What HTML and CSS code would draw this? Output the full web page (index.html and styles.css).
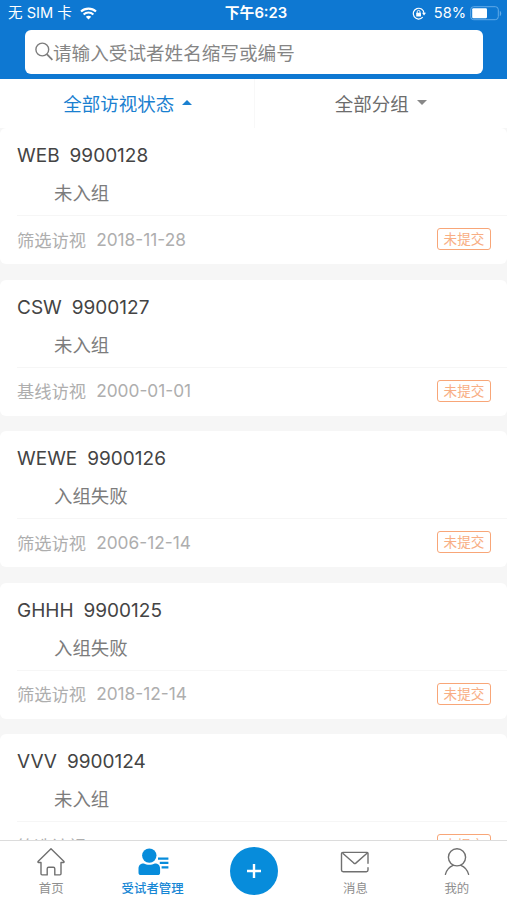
FILE: index.html
```html
<!DOCTYPE html>
<html lang="zh-CN">
<head>
    <meta charset="UTF-8">
    <meta name="viewport" content="width=device-width, initial-scale=1.0">
    <title>受试者管理</title>
    <link rel="stylesheet" href="styles.css">
</head>
<body>
<div class="app">
    <header class="header">
        <div class="status-bar">
            <div class="carrier">
                <span>无 SIM 卡</span>
                <svg class="wifi" viewBox="0 0 17 13" width="17" height="13" fill="none" stroke="#fff" stroke-width="2.1">
                    <path d="M1 4.6C5.2.6 11.8.6 16 4.6"/>
                    <path d="M3.6 7.4c2.8-2.6 7-2.6 9.8 0"/>
                    <path d="M8.5 12.6L5.8 9.8c1.5-1.4 3.9-1.4 5.4 0z" fill="#fff" stroke="none"/>
                </svg>
            </div>
            <div class="time">下午6:23</div>
            <div class="battery-info">
                <svg class="lock" viewBox="0 0 14 13" width="14" height="13" fill="none" stroke="#fff" stroke-width="1.2">
                    <path d="M10.7 10.2A5.4 5.4 0 1 1 12 6.2"/>
                    <path d="M10 5.8h4l-2 2.7z" fill="#fff" stroke="none"/>
                    <rect x="4.2" y="5.8" width="4.8" height="3.6" rx=".5" fill="#fff" stroke="none"/>
                    <path d="M5.2 6V4.8a1.4 1.4 0 0 1 2.8 0V6" stroke-width="1"/>
                </svg>
                <span class="percent">58%</span>
                <svg class="battery" viewBox="0 0 32 15" width="32" height="15">
                    <rect x=".7" y=".7" width="27.6" height="13" rx="3" fill="none" stroke="#62abe8"/>
                    <rect x="2.2" y="2.2" width="14.8" height="10" rx="1.2" fill="#fff"/>
                    <path d="M29.8 5v5c1.9-.6 1.9-4.4 0-5z" fill="#62abe8"/>
                </svg>
            </div>
        </div>
        <div class="search">
            <svg viewBox="0 0 18 19" width="18" height="19" fill="none" stroke="#7d7d7d" stroke-width="1.4">
                <circle cx="7.3" cy="7.5" r="6.4"/>
                <path d="M11.8 12.2l5.6 5.6" stroke-width="1.8"/>
            </svg>
            <span>请输入受试者姓名缩写或编号</span>
        </div>
    </header>

    <div class="filters">
        <div class="filter active">全部访视状态<i class="arrow up"></i></div>
        <div class="filter">全部分组<i class="arrow down"></i></div>
    </div>

    <main class="list">
        <div class="card">
            <div class="name"><span>WEB</span><span>9900128</span></div>
            <div class="group">未入组</div>
            <div class="visit"><span>筛选访视</span><span class="date">2018-11-28</span><span class="tag">未提交</span></div>
        </div>
        <div class="card">
            <div class="name"><span>CSW</span><span>9900127</span></div>
            <div class="group">未入组</div>
            <div class="visit"><span>基线访视</span><span class="date">2000-01-01</span><span class="tag">未提交</span></div>
        </div>
        <div class="card">
            <div class="name"><span>WEWE</span><span>9900126</span></div>
            <div class="group">入组失败</div>
            <div class="visit"><span>筛选访视</span><span class="date">2006-12-14</span><span class="tag">未提交</span></div>
        </div>
        <div class="card">
            <div class="name"><span>GHHH</span><span>9900125</span></div>
            <div class="group">入组失败</div>
            <div class="visit"><span>筛选访视</span><span class="date">2018-12-14</span><span class="tag">未提交</span></div>
        </div>
        <div class="card">
            <div class="name"><span>VVV</span><span>9900124</span></div>
            <div class="group">未入组</div>
            <div class="visit"><span>筛选访视</span><span class="tag">未提交</span></div>
        </div>
    </main>

    <nav class="tabbar">
        <div class="tab">
            <svg viewBox="0 0 30 30" width="30" height="30" fill="none" stroke="#707070" stroke-width="1.4" stroke-linejoin="round">
                <path d="M15 1.8L2 14.6c-.3.5 0 .9.5.9H5v11.3c0 .7.4 1.1 1.1 1.1h5.1v-6.2c0-1 .5-1.5 1.4-1.5h4.8c.9 0 1.4.5 1.4 1.5v6.2h5.1c.7 0 1.1-.4 1.1-1.1V15.5h2.5c.5 0 .8-.4.5-.9z"/>
            </svg>
            <span>首页</span>
        </div>
        <div class="tab active">
            <svg viewBox="0 0 32 30" width="32" height="30" fill="#078cdb">
                <circle cx="12.3" cy="8.6" r="7.2"/>
                <path d="M1.5 25.5v-3.8c0-3.5 2-5.3 5.3-5.3 3.2 1.8 7.8 1.8 11 0 3.3 0 5.3 1.8 5.3 5.3v3.8c0 1.8-.8 2.6-2.6 2.6H4.1c-1.8 0-2.6-.8-2.6-2.6z"/>
                <path d="M21 10.4h10.4v2.3H21zM22.8 14.8h8.6v2.3h-8.6zM24.6 19.2h6.8v2.3h-6.8z"/>
            </svg>
            <span>受试者管理</span>
        </div>
        <div class="tab">
            <div class="add">
                <svg viewBox="0 0 14 14" width="14" height="14" stroke="#fff" stroke-width="2.4">
                    <path d="M7 0v14M0 7h14"/>
                </svg>
            </div>
        </div>
        <div class="tab">
            <svg viewBox="0 0 30 30" width="30" height="30" fill="none" stroke="#707070" stroke-width="1.4" stroke-linecap="round" stroke-linejoin="round">
                <path d="M28 16.3V6.2c0-.5-.3-.8-.8-.8H3c-1 0-1.5.5-1.5 1.5V23c0 1.1.6 1.7 1.7 1.7h23.1c1.1 0 1.7-.6 1.7-1.7v-2.3"/>
                <path d="M3 6.5l10.8 9.6c.6.5 1.4.5 2 0L27.3 6"/>
            </svg>
            <span>消息</span>
        </div>
        <div class="tab">
            <svg viewBox="0 0 30 30" width="30" height="30" fill="none" stroke="#707070" stroke-width="1.4" stroke-linecap="round">
                <circle cx="15" cy="10.3" r="8.6"/>
                <path d="M3.4 27.4c1.2-4.6 4-7.6 7.7-9.1M18.9 18.3c3.7 1.5 6.5 4.5 7.7 9.1"/>
            </svg>
            <span>我的</span>
        </div>
    </nav>
</div>
</body>
</html>
```
FILE: styles.css
```css
* {
    box-sizing: border-box;
}
body {
    margin: 0;
    font-family: Inter, "Noto Sans CJK SC", sans-serif;
    background-color: #f6f6f6;
}
.app {
    display: flex;
    flex-direction: column;
    height: 900px;
    max-height: 100vh;
    overflow: hidden;
}
.header {
    flex: none;
    height: 79px;
    background-color: #0e78d2;
}
.status-bar {
    display: grid;
    grid-template-columns: 1fr auto 1fr;
    align-items: center;
    height: 30px;
    padding: 0 5px 3px 8px;
    color: #fff;
    font-size: 15px;
    line-height: 27px;
}
.carrier, .battery-info {
    display: flex;
    align-items: center;
}
.carrier {
    gap: 8px;
    font-size: 14.6px;
}
.time {
    padding-left: 2px;
    font-size: 14.8px;
    font-weight: 600;
}
.battery-info {
    justify-content: flex-end;
}
.percent {
    margin: 0 4px 0 8px;
    font-size: 14.6px;
}
.search {
    display: flex;
    align-items: center;
    height: 44px;
    margin: 0 24px 0 25px;
    padding: 0 0 2px 10px;
    border-radius: 6px;
    background-color: #fff;
    color: #858585;
    font-size: 18.6px;
}
.filters {
    display: grid;
    grid-template-columns: 1fr 1fr;
    flex: none;
    height: 49px;
    background-color: #fff;
}
.filter {
    display: flex;
    align-items: center;
    justify-content: center;
    gap: 8px;
    padding-bottom: 2px;
    color: #6c6c6c;
    font-size: 18.5px;
}
.filter + .filter {
    border-left: 1px solid #f8f8f8;
}
.filter.active {
    padding-left: 2px;
    color: #1a80d0;
}
.arrow {
    border: 5px solid transparent;
}
.arrow.up {
    border-top: 0;
    border-bottom-color: #1a80d0;
}
.arrow.down {
    border-bottom: 0;
    border-top-color: #888;
}
.list {
    flex: 1;
    min-height: 0;
    overflow: hidden;
}
.card {
    height: 136px;
    margin-bottom: 15.5px;
    padding-left: 17px;
    border-radius: 6px;
    background-color: #fff;
}
.name {
    display: flex;
    gap: 10px;
    padding-top: 14px;
    color: #444;
    font-size: 19px;
    line-height: 28px;
}
.group {
    height: 45px;
    padding-left: 37px;
    color: #7c7c7c;
    font-size: 18.4px;
    line-height: 46px;
}
.visit {
    display: flex;
    align-items: center;
    height: 48px;
    padding: 0 16px 1px 0;
    border-top: 1px solid #f6f6f6;
    color: #aeaeae;
    font-size: 17.3px;
}
.date {
    margin-left: 10px;
}
.tag {
    width: 54px;
    height: 22px;
    margin-left: auto;
    border: 1px solid #f8a678;
    border-radius: 3px;
    color: #f8ae84;
    font-size: 13.6px;
    line-height: 20px;
    text-align: center;
}
.tabbar {
    display: grid;
    grid-template-columns: repeat(5, 1fr);
    flex: none;
    height: 60px;
    border-top: 1px solid #dcdcdc;
    background-color: #fff;
}
.tab {
    display: flex;
    flex-direction: column;
    align-items: center;
    padding: 6px 0 0 1px;
    color: #8e8e8e;
    font-size: 12.4px;
    line-height: 24px;
}
.tab.active {
    color: #1686d4;
    font-weight: 500;
}
.add {
    display: flex;
    align-items: center;
    justify-content: center;
    width: 48px;
    height: 48px;
    border-radius: 50%;
    background-color: #078cdb;
}
```
